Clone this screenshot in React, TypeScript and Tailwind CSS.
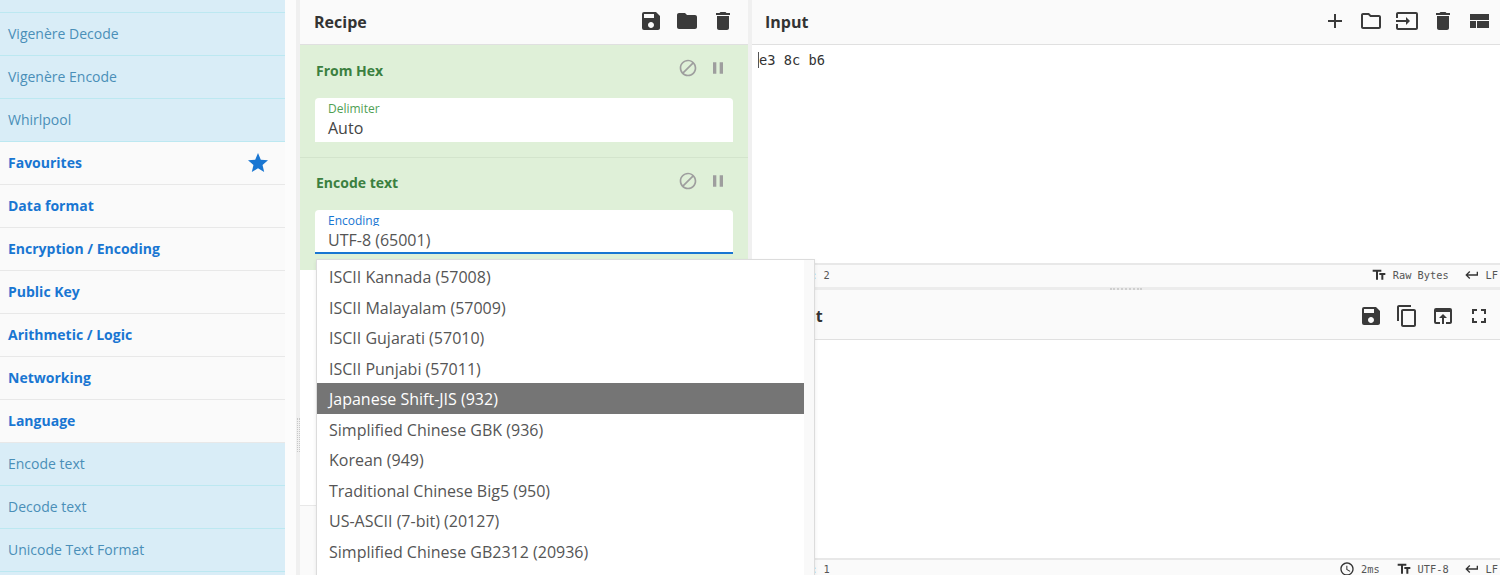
import React from "react";
import { MdSave, MdFolder, MdDelete, MdBlock, MdPause, MdAdd, MdOutlineFolder, MdInput, MdContentCopy, MdOpenInBrowser, MdFullscreen, MdTextFields, MdKeyboardReturn, MdAccessTime, MdStar } from "react-icons/md";

const font = { fontFamily: '"Open Sans","Noto Sans",sans-serif' };
const mono = { fontFamily: '"DejaVu Sans Mono",monospace' };

function OpRow({ label }: { label?: string }) {
  return <div className="h-[43px] shrink-0 flex items-center pl-2 pb-[1px] bg-[#d9edf7] text-[#4a8fb8] border-b border-[#bce8f1] text-[14px]">{label}</div>;
}
function CatRow({ label, star }: { label: string; star?: boolean }) {
  return (
    <div className="h-[43px] shrink-0 flex items-center justify-between pl-2 pr-[15px] pb-[1px] bg-[#fafafa] text-[#1976d2] border-b border-[#e8e8e8] text-[14px] font-bold">
      <span>{label}</span>
      {star && <MdStar className="text-[#1976d2]" size={24} />}
    </div>
  );
}
function Operation({ title, label, value, focus }: { title: string; label: string; value: string; focus?: boolean }) {
  return (
    <div className={`shrink-0 bg-[#dff0d8] px-[15px] ${focus ? "h-[112px] pt-[12px]" : "h-[113px] pt-[13px] border-b border-[#d3e4cc]"}`}>
      <div className="flex items-center justify-between h-[24px]">
        <span className="ml-px text-[#3b8040] font-bold text-[14px]">{title}</span>
        <div className={`flex items-center gap-[10px] pr-[5px] text-[#9e9e9e] ${focus ? "-mt-[3px]" : "-mt-[4px]"}`}>
          <MdBlock size={20} />
          <MdPause size={20} />
        </div>
      </div>
      <div className={`h-[44px] bg-white rounded-t-[4px] pl-[13px] overflow-hidden mt-[16px] ${focus ? "border-b-2 border-[#1976d2]" : ""}`}>
        <div className="h-[19px]">
          <div className={`text-[12px] leading-[14px] pt-[4px] ${focus ? "h-[16px] overflow-hidden text-[#1976d2]" : "text-[#4f9f55]"}`}>{label}</div>
        </div>
        <div className={`text-[16px] leading-[22px] ${focus ? "text-[#555]" : "text-[#444]"}`}>{value}</div>
      </div>
    </div>
  );
}
function Header({ title, children, className }: { title: string; children: React.ReactNode; className?: string }) {
  return (
    <div className={`flex items-center justify-between bg-[#fafafa] border-b border-[#e0e0e0] shrink-0 ${className ?? ""}`}>
      <span className="text-[16px] font-bold text-[#333]">{title}</span>
      {children}
    </div>
  );
}
function StatusText({ children }: { children: React.ReactNode }) {
  return <span className="block text-[10.3px] leading-[14px] text-[#555]" style={mono}>{children}</span>;
}
const items = ["ISCII Kannada (57008)", "ISCII Malayalam (57009)", "ISCII Gujarati (57010)", "ISCII Punjabi (57011)", "Japanese Shift-JIS (932)", "Simplified Chinese GBK (936)", "Korean (949)", "Traditional Chinese Big5 (950)", "US-ASCII (7-bit) (20127)", "Simplified Chinese GB2312 (20936)"];

export default function App() {
  return (
    <div className="relative flex h-[575px] w-[1500px] overflow-hidden bg-white" style={font}>
      <div className="w-[296px] shrink-0 flex bg-[#fcfcfc]">
        <div className="w-[285px] shrink-0 flex flex-col -mt-[30px]">
          <OpRow />
          <OpRow label="Vigenère Decode" />
          <OpRow label="Vigenère Encode" />
          <OpRow label="Whirlpool" />
          <CatRow label="Favourites" star />
          <CatRow label="Data format" />
          <CatRow label="Encryption / Encoding" />
          <CatRow label="Public Key" />
          <CatRow label="Arithmetic / Logic" />
          <CatRow label="Networking" />
          <CatRow label="Language" />
          <OpRow label="Encode text" />
          <OpRow label="Decode text" />
          <OpRow label="Unicode Text Format" />
          <OpRow />
        </div>
      </div>
      <div className="w-[4px] shrink-0 bg-[#f0f0f0] flex items-center justify-center">
        <div className="w-[3px] h-[34px] mt-[295px] border-x border-dotted border-[#c8c8c8]" />
      </div>
      <div className="w-[448px] shrink-0 flex flex-col">
        <Header title="Recipe" className="h-[45px] pl-[14px] pr-[13px]">
          <div className="flex items-center gap-[12px] text-[#3a3a3a] -mt-[3px]">
            <MdSave size={24} />
            <MdFolder size={24} />
            <MdDelete size={24} />
          </div>
        </Header>
        <Operation title="From Hex" label="Delimiter" value="Auto" />
        <Operation title="Encode text" label="Encoding" value="UTF-8 (65001)" focus />
        <div className="flex-1 bg-white" />
        <div className="h-[70px] shrink-0 bg-[#fafafa] border-t border-[#e8e8e8]" />
      </div>
      <div className="w-[4px] shrink-0 bg-[#f0f0f0]" />
      <div className="flex-1 flex flex-col min-w-0">
        <Header title="Input" className="h-[45px] pl-[13px] pr-[9px]">
          <div className="flex items-center gap-[12px] text-[#3a3a3a] -mt-[3px]">
            <MdAdd size={24} />
            <MdOutlineFolder size={24} />
            <MdInput size={24} />
            <MdDelete size={24} />
            <svg width="24" height="24" viewBox="0 0 24 24" fill="currentColor"><path d="M3 19h6v-7H3v7zm7 0h12v-7H10v7zM3 5v6h19V5H3z" /></svg>
          </div>
        </Header>
        <div className="h-[218px] shrink-0 pl-[6px] pt-[6px] leading-[18px] text-[#333]" style={mono}>
          <span className="border-l border-[#555] text-[13.7px]">e3 8c b6</span>
        </div>
        <div className="h-[24px] shrink-0 bg-[#fafafa] border-t-2 border-[#e8e8e8] flex items-center justify-between pr-[2px] pb-[2px]">
          <span className="pl-[22px]"><StatusText>length: 2</StatusText></span>
          <div className="flex items-center gap-[6px]">
            <MdTextFields size={16} className="text-[#333]" />
            <StatusText>Raw Bytes</StatusText>
            <MdKeyboardReturn size={16} className="text-[#333] ml-[9px]" />
            <StatusText>LF</StatusText>
          </div>
        </div>
        <div className="h-[3px] shrink-0 bg-[#ececec] flex items-center justify-center">
          <div className="w-[32px] border-t-2 border-dotted border-[#cfcfcf]" />
        </div>
        <Header title="Output" className="h-[50px] pl-[13px] pr-[9px] pt-[2px]">
          <div className="flex items-center gap-[12px] text-[#3a3a3a]">
            <MdSave size={24} />
            <MdContentCopy size={24} />
            <MdOpenInBrowser size={24} />
            <MdFullscreen size={24} />
          </div>
        </Header>
        <div className="flex-1" />
        <div className="h-[17px] shrink-0 bg-[#fafafa] border-t-2 border-[#e8e8e8] flex items-start justify-between pr-[2px] pt-[2px]">
          <span className="pl-[22px]"><StatusText>length: 1</StatusText></span>
          <div className="flex items-center gap-[6px] h-[14px]">
            <MdAccessTime size={16} className="text-[#333]" />
            <StatusText>2ms</StatusText>
            <MdTextFields size={16} className="text-[#333] ml-[10px]" />
            <StatusText>UTF-8</StatusText>
            <MdKeyboardReturn size={16} className="text-[#333] ml-[9px]" />
            <StatusText>LF</StatusText>
          </div>
        </div>
      </div>
      <div className="absolute left-[316px] top-[259px] w-[499px] h-[340px] bg-white border border-[#dcdcdc] shadow-[0_2px_4px_rgba(0,0,0,0.08)] flex">
        <div className="w-[487px] shrink-0 pt-[1px]">
          {items.map((t, i) => (
            <div key={t} className={`h-[30.5px] leading-[30.5px] pt-[1px] pl-[12px] text-[16px] ${i === 4 ? "bg-[#757575] text-white" : "text-[#555]"}`}>{t}</div>
          ))}
        </div>
        <div className="flex-1 bg-[#f9f9f9]" />
      </div>
    </div>
  );
}
